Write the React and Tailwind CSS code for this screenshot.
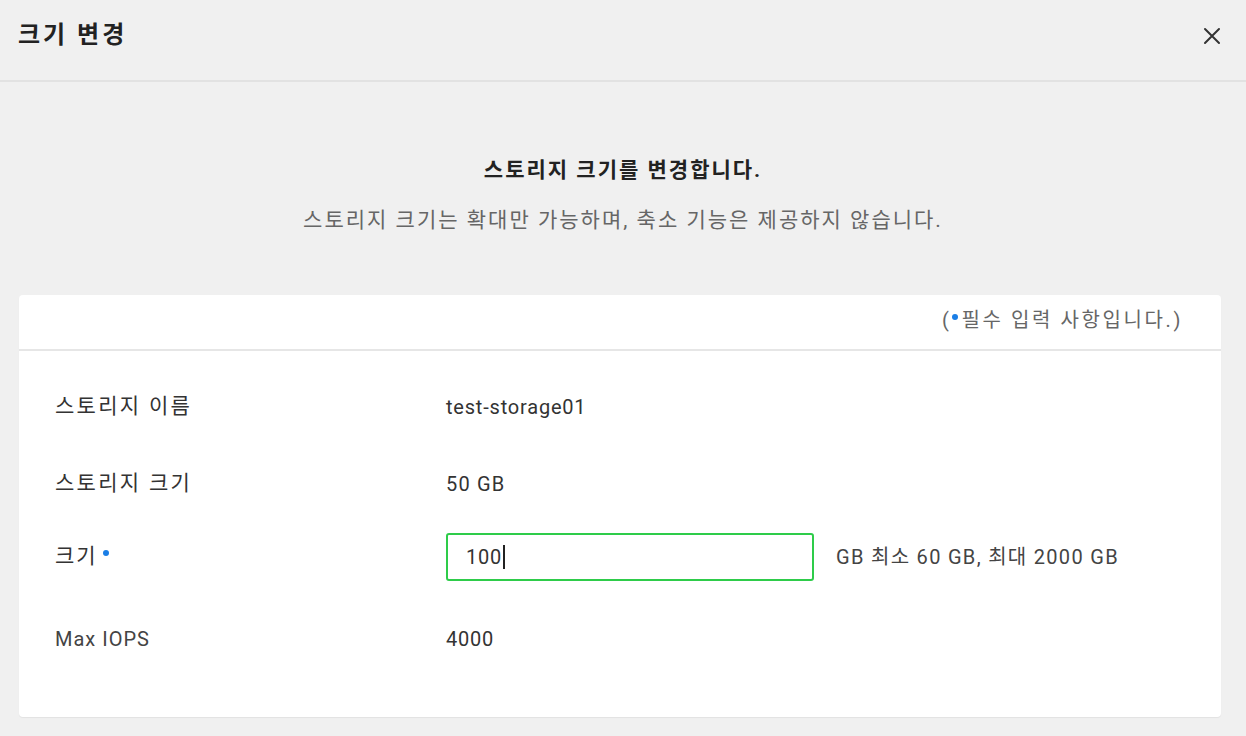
import React from "react";

export default function App() {
  return (
    <div className="w-[1246px] h-[736px] bg-[#f0f0f0] overflow-hidden flex flex-col font-['Roboto','Noto_Sans_CJK_KR',sans-serif]">
      <div className="h-[82px] shrink-0 border-b-2 border-[#e2e2e2] flex items-center justify-between pl-[18px] pr-[24px] pb-[10px]">
        <div className="text-[24px] font-bold text-[#222] tracking-[3px]">크기 변경</div>
        <svg width="20" height="20" viewBox="0 0 20 20" className="mt-[2px]">
          <path d="M3 3 L17 17 M17 3 L3 17" stroke="#333" strokeWidth="2" strokeLinecap="round" />
        </svg>
      </div>
      <div className="flex flex-col items-center pt-[74px]">
        <div className="text-[21px] font-bold text-[#222] leading-[28px] tracking-[2px]">스토리지 크기를 변경합니다.</div>
        <div className="text-[21px] text-[#666] leading-[28px] mt-[22px] tracking-[2px]">스토리지 크기는 확대만 가능하며, 축소 기능은 제공하지 않습니다.</div>
      </div>
      <div className="ml-[19px] mr-[25px] mt-[61px] bg-white rounded-[4px] shadow-[0_1px_1px_rgba(0,0,0,0.06)]">
        <div className="h-[56px] border-b-2 border-[#e6e6e6] flex items-center justify-end pr-[38px] pb-[4px]">
          <div className="text-[20px] text-[#666] flex items-center tracking-[2.6px]">
            (<span className="inline-block w-[6px] h-[6px] rounded-full bg-[#1a7ee6] ml-[1px] mr-[3px] -mt-[6px]"></span>필수 입력 사항입니다.)
          </div>
        </div>
        <div className="flex flex-col pl-[36px] pt-[32px] pb-[54px]">
          <div className="h-[48px] flex items-center">
            <div className="w-[391px] text-[21px] text-[#333] tracking-[2.3px]">스토리지 이름</div>
            <div className="text-[20px] text-[#333] tracking-[0.8px]">test-storage01</div>
          </div>
          <div className="h-[48px] flex items-center mt-[29px]">
            <div className="w-[391px] text-[21px] text-[#333] tracking-[2.3px]">스토리지 크기</div>
            <div className="text-[20px] text-[#333] tracking-[1.2px]">50 GB</div>
          </div>
          <div className="h-[48px] flex items-center mt-[25px]">
            <div className="w-[391px] text-[21px] text-[#333] flex items-center tracking-[2px]">
              크기<span className="inline-block w-[6px] h-[6px] rounded-full bg-[#1a7ee6] ml-[5px] -mt-[8px]"></span>
            </div>
            <div className="w-[368px] h-[48px] border-2 border-[#2ecc4a] rounded-[3px] flex items-center pl-[18px] text-[20px] text-[#333] tracking-[0.8px]">
              100<span className="inline-block w-[1.5px] h-[24px] bg-[#222] ml-[1px]"></span>
            </div>
            <div className="ml-[22px] text-[20px] text-[#444] tracking-[1.3px]">GB 최소 60 GB, 최대 2000 GB</div>
          </div>
          <div className="h-[48px] flex items-center mt-[34px]">
            <div className="w-[391px] text-[20px] text-[#444] tracking-[1px]">Max IOPS</div>
            <div className="text-[20px] text-[#333] tracking-[0.8px]">4000</div>
          </div>
        </div>
      </div>
    </div>
  );
}
